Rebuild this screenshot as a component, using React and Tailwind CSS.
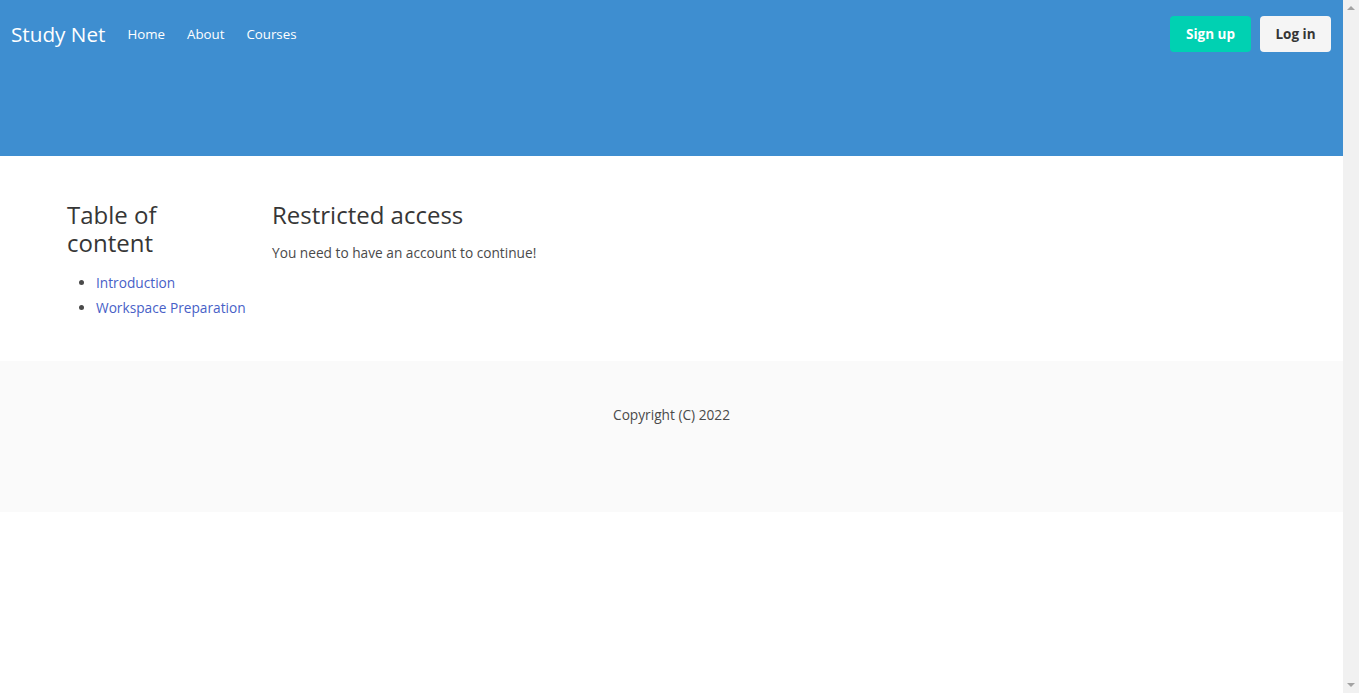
const navLinks = ['Home', 'About', 'Courses']

const tocLinks = ['Introduction', 'Workspace Preparation']

function Scrollbar() {
  return (
    <div className="flex h-screen w-[16px] shrink-0 flex-col items-center justify-between bg-[#f1f1f1] py-[6px]">
      <div className="h-0 w-0 border-x-[4px] border-b-[4px] border-x-transparent border-b-[#a3a3a3]" />
      <div className="h-0 w-0 border-x-[4px] border-t-[4px] border-x-transparent border-t-[#a3a3a3]" />
    </div>
  )
}

export default function App() {
  return (
    <div className="flex h-screen overflow-hidden bg-white font-['Segoe_UI','Open_Sans',sans-serif] text-[#4a4a4a]">
      <div className="min-w-0 flex-1">
        <header className="h-[156px] bg-[#3e8ed0] text-white">
          <nav className="flex h-[68px] items-center pl-[11px] pr-3">
            <a className="mr-[22px] text-[20.7px] leading-none">Study Net</a>
            <div className="mt-[2px] flex items-center gap-[22px] text-[13.3px]">
              {navLinks.map((label) => (
                <a key={label}>{label}</a>
              ))}
            </div>
            <div className="ml-auto flex items-center gap-[9px] text-[13.5px] font-bold">
              <button className="h-[36px] w-[81px] rounded-[4px] bg-[#00d1b2] text-white">Sign up</button>
              <button className="h-[36px] w-[71px] rounded-[4px] bg-[#f5f5f5] text-[#363636]">Log in</button>
            </div>
          </nav>
        </header>

        <main className="flex px-[67px] pt-[45px] pb-[43px]">
          <aside className="w-[205px] shrink-0">
            <h2 className="w-[150px] text-[24px] leading-[28px] text-[#363636]">Table of content</h2>
            <ul className="mt-[16px] ml-[29px] list-disc space-y-[5px] text-[13.7px] leading-[20px] text-[#485fc7] marker:text-[#4a4a4a]">
              {tocLinks.map((label) => (
                <li key={label}>
                  <a>{label}</a>
                </li>
              ))}
            </ul>
          </aside>
          <section>
            <h1 className="text-[24px] leading-[28px] text-[#363636]">Restricted access</h1>
            <p className="mt-[14px] text-[13.7px] leading-[20px]">You need to have an account to continue!</p>
          </section>
        </main>

        <footer className="flex h-[151px] justify-center bg-[#fafafa] pt-[44px] text-[13.7px]">
          <p>Copyright (C) 2022</p>
        </footer>
      </div>
      <Scrollbar />
    </div>
  )
}
